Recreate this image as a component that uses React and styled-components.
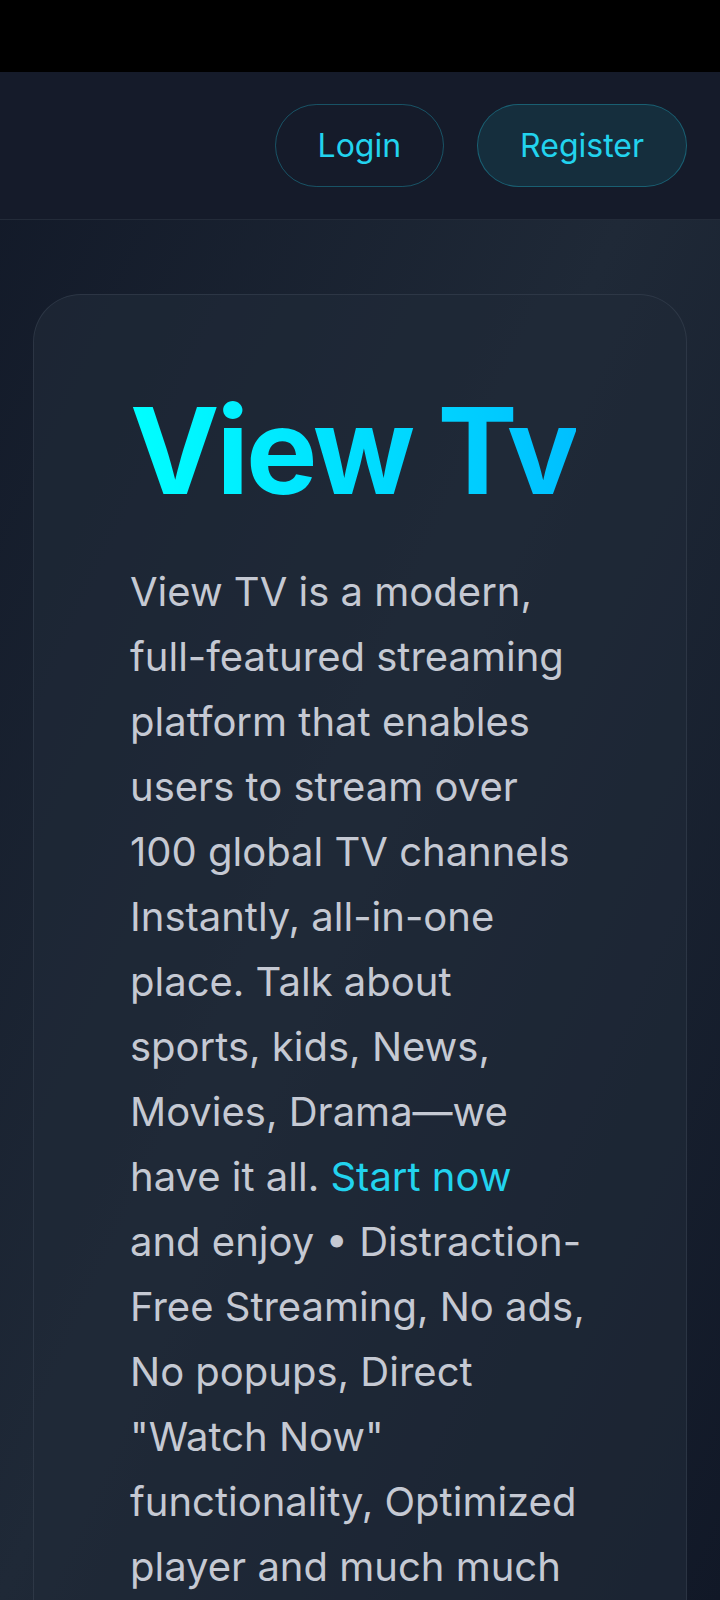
import React from "react";
import styled, { createGlobalStyle } from "styled-components";

const GlobalStyle = createGlobalStyle`
  * {
    box-sizing: border-box;
  }

  body {
    margin: 0;
    background: #111827;
    font-family: Inter, "Noto Sans", "Liberation Sans", sans-serif;
  }
`;

const Page = styled.div`
  display: flex;
  flex-direction: column;
  min-height: 100vh;
`;

const StatusBar = styled.div`
  height: 72px;
  background: #000;
`;

const Header = styled.header`
  display: flex;
  align-items: center;
  justify-content: flex-end;
  gap: 33px;
  height: 148px;
  padding: 0 33px;
  background: #151b2a;
  border-bottom: 1px solid #232b39;
`;

const PillButton = styled.button`
  height: 83px;
  padding: 0 42px;
  border-radius: 999px;
  border: 1.5px solid rgba(34, 211, 238, 0.3);
  background: ${(props) =>
    props.filled ? "rgba(34, 211, 238, 0.1)" : "transparent"};
  color: #22d3ee;
  font-family: inherit;
  font-size: 32px;
  font-weight: 400;
  cursor: pointer;
`;

const Main = styled.main`
  flex: 1;
  padding: 74px 33px 80px;
  background: linear-gradient(to bottom right, #111827, #1f2937, #111827);
  background-attachment: fixed;
`;

const Card = styled.section`
  padding: 96px;
  border-radius: 48px;
  border: 1px solid rgba(75, 85, 99, 0.35);
  background: rgba(31, 41, 55, 0.7);
`;

const Content = styled.div`
  max-width: 455px;
`;

const Title = styled.h1`
  display: inline-block;
  margin: 0 0 48px;
  white-space: nowrap;
  font-size: 120px;
  line-height: 1;
  font-weight: 700;
  letter-spacing: -0.025em;
  background: linear-gradient(90deg, #00ffff, #00bfff);
  -webkit-background-clip: text;
  background-clip: text;
  color: transparent;
`;

const Text = styled.p`
  margin: 0;
  color: #c5c9d3;
  font-size: 40px;
  line-height: 65px;
`;

const Link = styled.a`
  color: #22d3ee;
  text-decoration: none;
`;

export default function App() {
  return (
    <Page>
      <GlobalStyle />
      <StatusBar />
      <Header>
        <PillButton>Login</PillButton>
        <PillButton filled>Register</PillButton>
      </Header>
      <Main>
        <Card>
          <Content>
            <Title>View Tv</Title>
            <Text>
              View TV is a modern, full-featured streaming platform that
              enables users to stream over 100 global TV channels Instantly,
              all-in-one place. Talk about sports, kids, News, Movies,
              Drama—we have it all. <Link href="#">Start now</Link> and enjoy
              • Distraction-Free Streaming, No ads, No popups, Direct "Watch
              Now" functionality, Optimized player and much much more.
            </Text>
          </Content>
        </Card>
      </Main>
    </Page>
  );
}
